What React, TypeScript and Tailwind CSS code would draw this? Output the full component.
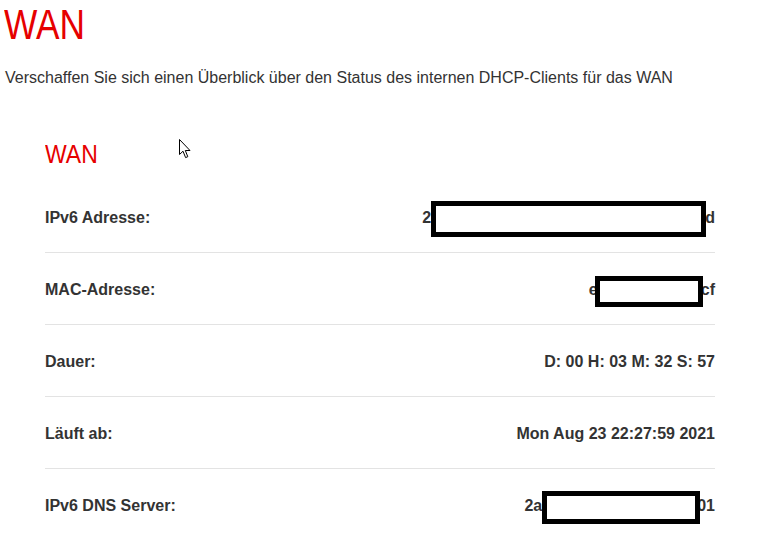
import React from "react";

type Row = {
  label: string;
  value: React.ReactNode;
  last?: boolean;
};

function Masked({
  before,
  after,
  box,
}: {
  before: string;
  after: string;
  box: string;
}) {
  return (
    <span className="flex h-[24px] items-center">
      <span>{before}</span>
      <span className={`relative z-10 box-border shrink-0 border-[5px] border-black bg-white ${box}`} />
      <span>{after}</span>
    </span>
  );
}

function Cursor() {
  return (
    <svg
      className="absolute left-[179px] top-[139px]"
      width="13"
      height="20"
      viewBox="0 0 13 20"
    >
      <path
        d="M0.5 0.5 L0.5 15.5 L4 12.2 L6.6 18.6 L8.8 17.7 L6.3 11.5 L11 11.5 Z"
        fill="#fff"
        stroke="#000"
        strokeWidth="1"
        strokeLinejoin="miter"
      />
    </svg>
  );
}

export default function App() {
  const rows: Row[] = [
    {
      label: "IPv6 Adresse:",
      value: (
        <Masked
          before="2"
          after="d"
          box="h-[36px] w-[275px] translate-y-[1px] -mr-[1px]"
        />
      ),
    },
    {
      label: "MAC-Adresse:",
      value: (
        <Masked
          before="e"
          after="cf"
          box="h-[31px] w-[108px] -ml-[3px] -mr-[2px] translate-y-[1px]"
        />
      ),
    },
    { label: "Dauer:", value: "D: 00 H: 03 M: 32 S: 57" },
    { label: "Läuft ab:", value: "Mon Aug 23 22:27:59 2021" },
    {
      label: "IPv6 DNS Server:",
      value: (
        <Masked
          before="2a"
          after="01"
          box="h-[33px] w-[158px] -mr-[3px] translate-y-[1px]"
        />
      ),
      last: true,
    },
  ];

  return (
    <div
      className="relative min-h-[560px] w-[778px] bg-white text-[#333]"
      style={{ fontFamily: '"Liberation Sans", Arial, sans-serif' }}
    >
      <div className="px-[4px]">
        <h1 className="mt-[4px] inline-block origin-left scale-x-[0.84] text-[42px] font-normal leading-[42px] text-[#e60000]">
          WAN
        </h1>
        <p className="mt-[20px] pl-[1px] text-[16px] leading-[24px] text-[#333]">
          Verschaffen Sie sich einen Überblick über den Status des internen
          DHCP-Clients für das WAN
        </p>
      </div>

      <section className="ml-[45px] mt-[52px] w-[670px]">
        <h2 className="inline-block origin-left scale-x-[0.92] text-[25px] font-normal leading-[25px] text-[#e60000]">
          WAN
        </h2>
        <div className="mt-[11px]">
          {rows.map((r) => (
            <div
              key={r.label}
              className={`flex h-[72px] items-start justify-between pt-[25px] text-[16px] font-bold leading-[24px] text-[#333] ${
                r.last ? "" : "border-b border-[#e3e3e3]"
              }`}
            >
              <span>{r.label}</span>
              <span className="flex h-[24px] items-center">{r.value}</span>
            </div>
          ))}
        </div>
      </section>

      <Cursor />
    </div>
  );
}
